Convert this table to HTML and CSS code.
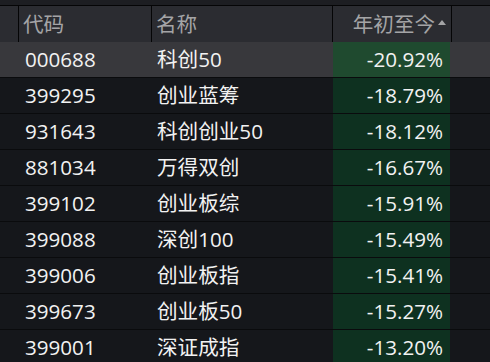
FILE: index.html
```html
<!DOCTYPE html>
<html lang="zh-CN">
<head>
<meta charset="utf-8">
<title>年初至今</title>
<link rel="stylesheet" href="styles.css">
</head>
<body>
<div class="topbar"></div>
<div class="table">
  <div class="row head">
    <div class="c0"></div>
    <div class="c1 hcell">代码</div>
    <div class="c2 hcell">名称</div>
    <div class="c3 hcell hsort">年初至今<span class="tri"></span></div>
    <div class="c4 hcell"></div>
  </div>
  <div class="row sel">
    <div class="c0"></div><div class="c1">000688</div><div class="c2">科创50</div><div class="c3">-20.92%</div><div class="c4"></div>
  </div>
  <div class="row">
    <div class="c0"></div><div class="c1">399295</div><div class="c2">创业蓝筹</div><div class="c3">-18.79%</div><div class="c4"></div>
  </div>
  <div class="row">
    <div class="c0"></div><div class="c1">931643</div><div class="c2">科创创业50</div><div class="c3">-18.12%</div><div class="c4"></div>
  </div>
  <div class="row">
    <div class="c0"></div><div class="c1">881034</div><div class="c2">万得双创</div><div class="c3">-16.67%</div><div class="c4"></div>
  </div>
  <div class="row">
    <div class="c0"></div><div class="c1">399102</div><div class="c2">创业板综</div><div class="c3">-15.91%</div><div class="c4"></div>
  </div>
  <div class="row">
    <div class="c0"></div><div class="c1">399088</div><div class="c2">深创100</div><div class="c3">-15.49%</div><div class="c4"></div>
  </div>
  <div class="row">
    <div class="c0"></div><div class="c1">399006</div><div class="c2">创业板指</div><div class="c3">-15.41%</div><div class="c4"></div>
  </div>
  <div class="row">
    <div class="c0"></div><div class="c1">399673</div><div class="c2">创业板50</div><div class="c3">-15.27%</div><div class="c4"></div>
  </div>
  <div class="row">
    <div class="c0"></div><div class="c1">399001</div><div class="c2">深证成指</div><div class="c3">-13.20%</div><div class="c4"></div>
  </div>
</div>
</body>
</html>
```
FILE: styles.css
```css
html, body {
  margin: 0;
  padding: 0;
  background: #15171b;
  overflow: hidden;
}
body {
  width: 490px;
  height: 362px;
  font-family: "Open Sans", "Noto Sans CJK SC", sans-serif;
  font-size: 20.6px;
  color: #f2f2f2;
}
.topbar {
  height: 5px;
  background: #1d1e22;
  border-bottom: 1px solid #050506;
}
.row {
  display: grid;
  grid-template-columns: 18px 133px 181px 119px 39px;
  height: 35px;
  border-bottom: 1px solid #0a0b0d;
  background: #15171b;
}
.row > div {
  display: flex;
  align-items: center;
  min-width: 0;
  white-space: nowrap;
  line-height: 1;
}
.row.head {
  height: 36px;
  border-bottom: none;
  background: #2b2c31;
}
.row.sel {
  background: #38383c;
}
.hcell {
  border-left: 1px solid #050506;
  color: #a4a4a6;
  padding-left: 4px;
}
.hsort {
  justify-content: flex-end;
  padding-right: 5px;
}
.tri {
  width: 0;
  height: 0;
  border-left: 4px solid transparent;
  border-right: 4px solid transparent;
  border-bottom: 5px solid #a4a4a6;
  margin-left: 3px;
  margin-bottom: 3px;
}
.row:not(.head) .c1 { padding-left: 7px; }
.row:not(.head) .c2 { padding-left: 6px; }
.row:not(.head) .c3 {
  justify-content: flex-end;
  padding-right: 7px;
  margin-left: 1px;
  margin-right: 1px;
  background: #0e3120;
}
.row.sel .c3 {
  background: #1f4a2f;
}
```
